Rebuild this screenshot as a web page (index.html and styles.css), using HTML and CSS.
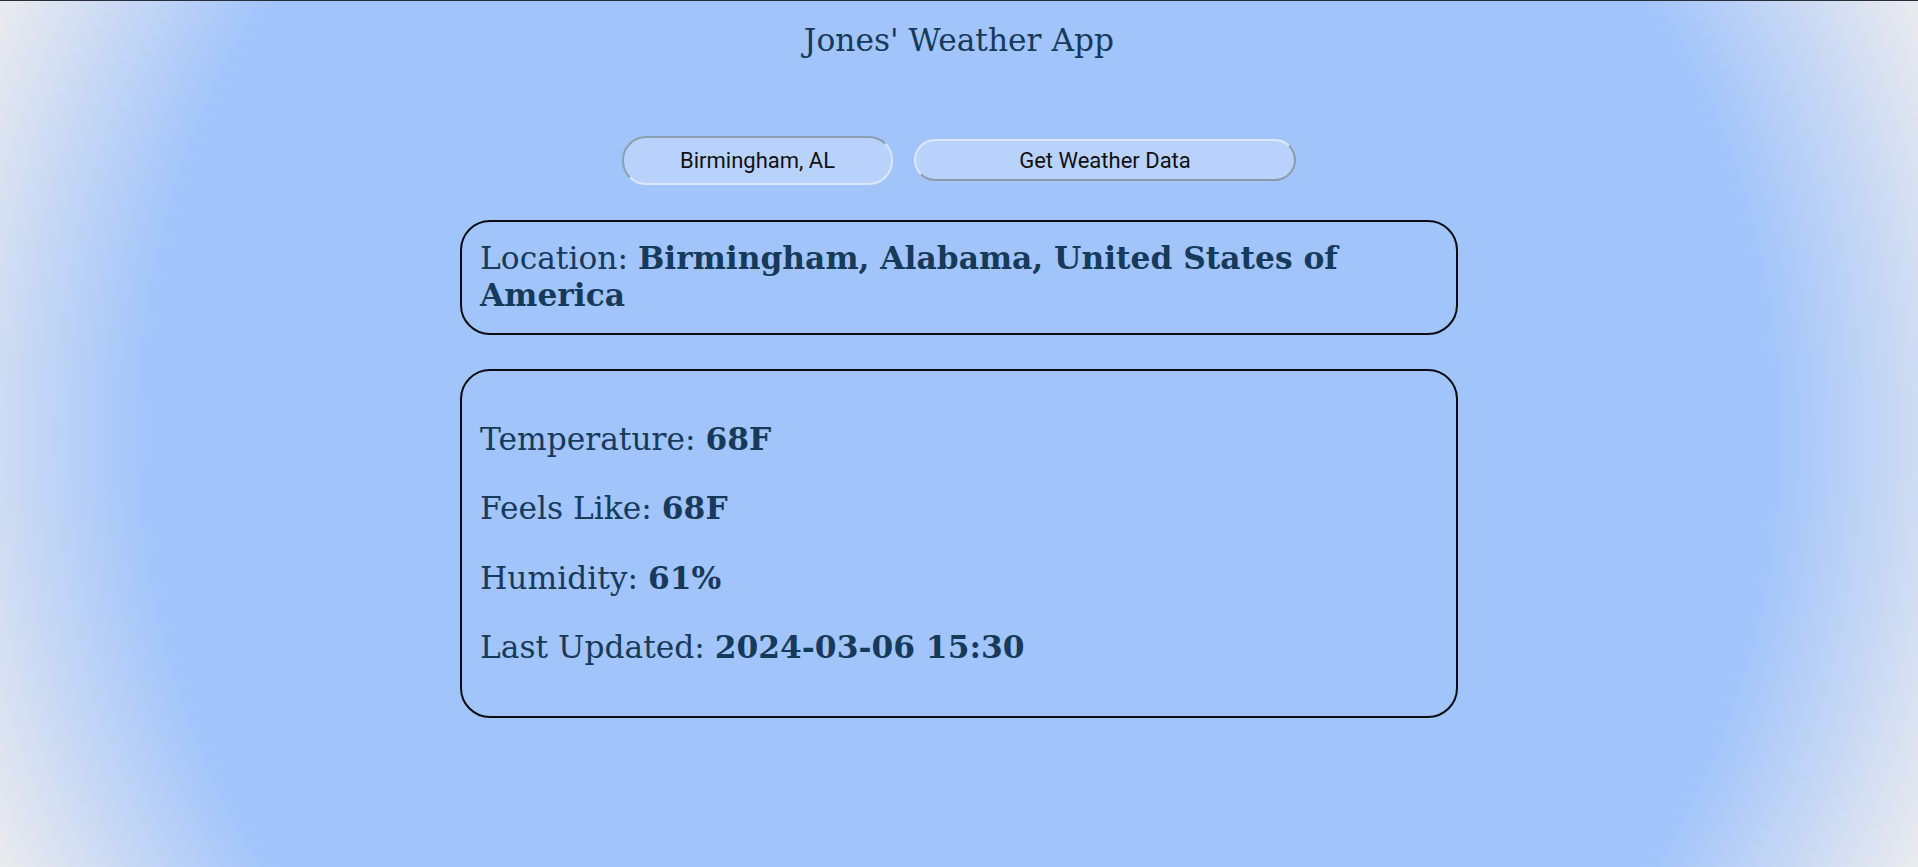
FILE: index.html
```html
<!DOCTYPE html>
<html lang="en">
<head>
<meta charset="utf-8">
<title>Jones' Weather App</title>
<link rel="stylesheet" href="styles.css">
</head>
<body>
  <h1 class="title">Jones' Weather App</h1>
  <main class="app">
    <form class="controls" onsubmit="return false;">
      <input class="city-input" type="text" value="Birmingham, AL">
      <button class="fetch-btn" type="submit">Get Weather Data</button>
    </form>
    <section class="card card-location">
      <div class="line">Location: <strong>Birmingham, Alabama, United States of America</strong></div>
    </section>
    <section class="card card-data">
      <p class="line">Temperature: <strong>68F</strong></p>
      <p class="line">Feels Like: <strong>68F</strong></p>
      <p class="line">Humidity: <strong>61%</strong></p>
      <p class="line">Last Updated: <strong>2024-03-06 15:30</strong></p>
    </section>
  </main>
</body>
</html>
```
FILE: styles.css
```css
html, body {
  height: 100%;
}
body {
  margin: 0;
  border-top: 1px solid #27303a;
  box-sizing: border-box;
  min-height: 867px;
  background: radial-gradient(circle at 50% 50%, #a1c4fb 0%, #a1c4fb 77%, #ebebee 100%);
  font-family: "DejaVu Serif", serif;
  color: #173a5a;
}
.title {
  margin: 21px 0 0;
  font-size: 31.3px;
  font-weight: normal;
  text-align: center;
  line-height: 37.5px;
}
.app {
  display: flex;
  flex-direction: column;
  align-items: center;
  gap: 35px;
  margin-top: 76px;
}
.controls {
  display: flex;
  align-items: center;
  justify-content: center;
  gap: 21px;
  margin: 0;
}
.city-input {
  box-sizing: border-box;
  width: 271px;
  height: 49px;
  border: 2px solid #dbe6f7;
  border-top-color: #8aa0b1;
  border-left-color: #8aa0b1;
  border-radius: 24px;
  background: #b9d2fc;
  font-family: Roboto, sans-serif;
  font-size: 22px;
  color: #111;
  text-align: center;
  padding: 0 10px;
  outline: none;
}
.fetch-btn {
  box-sizing: border-box;
  width: 382px;
  height: 42px;
  border: 2px solid #8f9aa8;
  border-top-color: #dfe8f6;
  border-left-color: #dfe8f6;
  border-radius: 21px;
  background: #b9d2fc;
  font-family: Roboto, sans-serif;
  font-size: 22px;
  color: #111;
  padding: 0;
}
.card {
  box-sizing: border-box;
  width: 998px;
  border: 2px solid #0b0d12;
  border-radius: 30px;
  padding: 18px;
  font-size: 31.3px;
  line-height: 37.5px;
}
.card strong {
  font-weight: bold;
}
.card-data {
  margin-top: -1px;
  padding-top: 18px;
  padding-bottom: 17px;
}
.card-data .line {
  margin: 32px 0;
}
```
